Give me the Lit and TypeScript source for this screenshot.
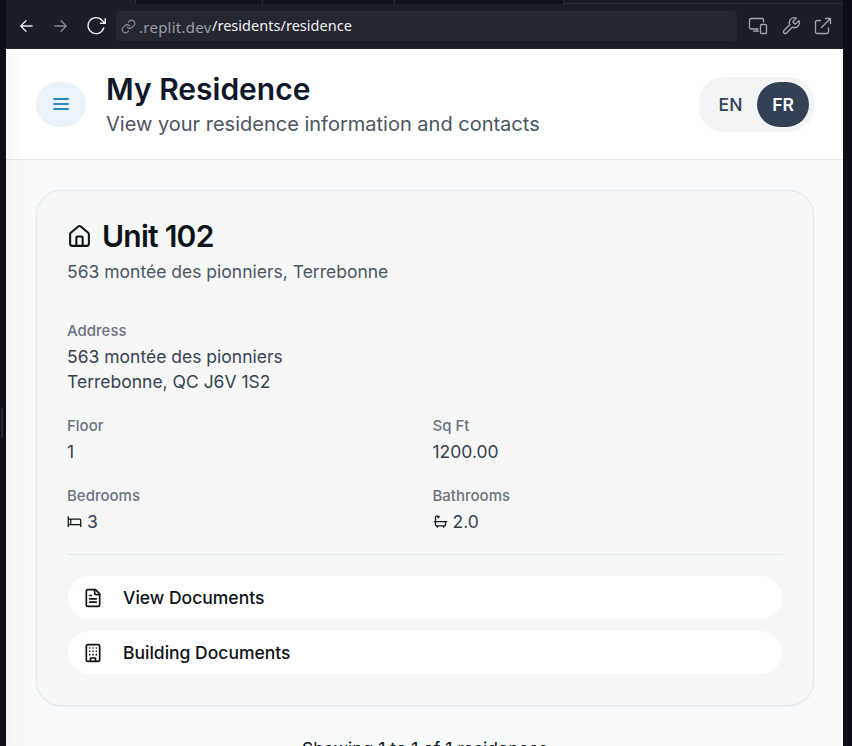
import { LitElement, html, css, svg } from "lit";
import { customElement, property } from "lit/decorators.js";

const glyphs: Record<string, { box: string; art: unknown }> = {
  back: { box: "0 0 16 16", art: svg`<path d="M15 8H2M8 2 2 8l6 6"/>` },
  forward: { box: "0 0 16 16", art: svg`<path d="M1 8h13M8 2l6 6-6 6"/>` },
  reload: { box: "0 0 20 20", art: svg`<path d="M18.300 7.200 15.200 4.500A8 8 0 1 0 16.700 12M18.300 2.700v4.600h-4.900"/>` },
  link: {
    box: "0 0 24 24",
    art: svg`<path d="M10 13a5 5 0 0 0 7.54.54l3-3a5 5 0 0 0-7.07-7.07l-1.72 1.71"/><path d="M14 11a5 5 0 0 0-7.54-.54l-3 3a5 5 0 0 0 7.07 7.07l1.71-1.71"/>`,
  },
  devices: {
    box: "0 0 20 18",
    art: svg`<path d="M15.500 5V2.700A1.200 1.200 0 0 0 14.300 1.500H3A1.500 1.500 0 0 0 1.500 3v7.500A1.500 1.500 0 0 0 3 12h7M8.500 12v2M5.500 14.200h5"/><rect x="12.500" y="7.500" width="6" height="9" rx="1"/>`,
  },
  wrench: {
    box: "0 0 24 24",
    art: svg`<path d="M14.7 6.300a1 1 0 0 0 0 1.400l1.600 1.600a1 1 0 0 0 1.400 0l3.770-3.770a6 6 0 0 1-7.940 7.940l-6.910 6.910a2.120 2.120 0 0 1-3-3l6.910-6.910a6 6 0 0 1 7.940-7.940l-3.760 3.760z"/>`,
  },
  external: {
    box: "0 0 18 18",
    art: svg`<path d="M6.500 3.500H3A1.500 1.500 0 0 0 1.500 5v10A1.500 1.500 0 0 0 3 16.500h10a1.500 1.500 0 0 0 1.500-1.500v-4M11.500 1.500h5v5M16.500 1.500 7.500 10.500"/>`,
  },
  menu: { box: "0 0 20 20", art: svg`<path d="M3 5h14M3 10h14M3 15h14"/>` },
  house: {
    box: "0 0 24 24",
    art: svg`<path d="M15 21v-8a1 1 0 0 0-1-1h-4a1 1 0 0 0-1 1v8"/><path d="M3 10a2 2 0 0 1 .709-1.528l7-5.999a2 2 0 0 1 2.582 0l7 5.999A2 2 0 0 1 21 10v9a2 2 0 0 1-2 2H5a2 2 0 0 1-2-2z"/>`,
  },
  bed: { box: "0 0 24 24", art: svg`<path d="M2 4v16M2 8h18a2 2 0 0 1 2 2v10M2 17h20M6 8v9"/>` },
  bath: {
    box: "0 0 24 24",
    art: svg`<path d="M10 4 8 6M17 19v2M2 12h20M7 19v2M9 5 7.621 3.621A2.121 2.121 0 0 0 4 5v12a2 2 0 0 0 2 2h12a2 2 0 0 0 2-2v-5"/>`,
  },
  file: {
    box: "0 0 24 24",
    art: svg`<path d="M15 2H6a2 2 0 0 0-2 2v16a2 2 0 0 0 2 2h12a2 2 0 0 0 2-2V7Z"/><path d="M14 2v4a2 2 0 0 0 2 2h4M10 9H8M16 13H8M16 17H8"/>`,
  },
  building: {
    box: "0 0 24 24",
    art: svg`<rect width="16" height="20" x="4" y="2" rx="2"/><path d="M9 22v-4h6v4M8 6h.01M16 6h.01M12 6h.01M12 10h.01M12 14h.01M16 10h.01M16 14h.01M8 10h.01M8 14h.01"/>`,
  },
};

@customElement("line-icon")
class LineIcon extends LitElement {
  @property() name = "";
  static styles = css`
    :host { display: block; flex: none; }
    .art {
      display: block; width: 100%; height: 100%; fill: none; stroke: currentColor;
      stroke-width: var(--stroke, 2); stroke-linecap: round; stroke-linejoin: round;
    }
  `;
  render() {
    const g = glyphs[this.name];
    return html`<svg class="art" viewBox=${g.box}>${g.art}</svg>`;
  }
}

@customElement("app-root")
class AppRoot extends LitElement {
  static styles = css`
    :host {
      display: flex; flex-direction: column; width: 852px; height: 746px; overflow: hidden;
      box-sizing: border-box; padding: 0 9px 0 6px; position: relative;
      background: #0e0e17; font-family: Inter, "Liberation Sans", sans-serif; color: #0d1317;
    }
    * { box-sizing: border-box; }
    h1, h2, p, dl, dt, dd { margin: 0; font-weight: 400; }
    button { font: inherit; border: 0; margin: 0; }
    .handle { position: absolute; left: 1px; top: 408px; width: 2px; height: 30px; background: #282a37; }

    .tabs { display: flex; flex: none; height: 4px; padding-left: 129px; background: #1b1d26; border-bottom: 1px solid #1b1d26; }
    .tab { border-left: 1px solid #2c2e38; background: #121318; height: 4px; }
    .t1 { width: 127px; } .t2 { width: 132px; } .t3 { width: 170px; border-right: 1px solid #2c2e38; }
    .tail { flex: 1; height: 4px; background: #181a22; border-bottom: 1px solid #2b2c37; }

    .bar { display: flex; flex: none; align-items: center; height: 45px; background: #1b1d26; padding: 0 11px 0 13px; color: #a3a6af; border-bottom: 1px solid #20222e; }
    .back { width: 14px; height: 14px; color: #e5e7eb; --stroke: 1.500; }
    .forward { width: 14px; height: 14px; margin-left: 21px; color: #858993; --stroke: 1.500; }
    .reload { width: 20px; height: 20px; margin-left: 19px; color: #eceef1; --stroke: 1.400; }
    .url { display: flex; align-items: center; width: 622px; height: 30px; margin-left: 9px; padding-left: 5px; border-radius: 5px; background: #252730; font-family: "Noto Sans", sans-serif; font-size: 15px; white-space: pre; }
    .link { width: 15px; height: 15px; color: #8d909a; --stroke: 1.700; margin-right: 3px; }
    .host { color: #9b9ea8; padding-top: 2px; width: 73px; letter-spacing: 0.250px; }
    .path { color: #f0f1f4; font-size: 14.500px; padding-bottom: 2px; letter-spacing: 0.030px; }
    .devices { width: 20px; height: 18px; margin-left: 11px; --stroke: 1.300; }
    .wrench { width: 20px; height: 20px; margin-left: 13px; --stroke: 1.600; }
    .external { width: 18px; height: 18px; margin-left: 13px; --stroke: 1.300; }

    .page { flex: 1; min-height: 0; display: flex; flex-direction: column; background: #f8fafc; position: relative; }
    .shade { position: absolute; left: 0; top: 0; bottom: 0; width: 20px; background: linear-gradient(90deg, rgba(0,0,0,.025), rgba(0,0,0,0)); }
    .header { display: flex; flex: none; align-items: center; height: 111px; padding: 0 29px 0 30px; background: #fff; border-bottom: 1px solid #e2e6ea; }
    .menu { display: flex; align-items: center; justify-content: center; width: 50px; height: 45px; border-radius: 22.500px; background: #eaf2fa; color: #3286bd; padding: 0; }
    .menu-icon { width: 20px; height: 20px; margin-top: -1px; --stroke: 2; }
    .heading { flex: 1; margin-left: 20px; }
    .title { font-size: 30px; line-height: 40px; font-weight: 600; color: #0f172a; }
    .sub { font-size: 20px; line-height: 30px; color: #4b5563; }
    .langs { display: flex; width: 115px; height: 55px; padding: 5px; border-radius: 25px; background: #f2f4f6; }
    .lang { padding: 0; width: 53px; border-radius: 22.500px; background: none; color: #334155; font-size: 17.500px; font-weight: 500; }
    .on { width: 52px; background: #334155; color: #fff; font-weight: 600; }

    .card { flex: none; height: 516px; margin: 30px 29px 0 30px; padding: 30px; border: 1px solid #dfe8ee; border-radius: 25px; background: #f6f8f8; box-shadow: 0 1px 2px rgba(0,0,0,.05); }
    .unit { display: flex; align-items: center; height: 30px; font-size: 30px; font-weight: 600; letter-spacing: -0.750px; gap: 10px; }
    .house { width: 25px; height: 25px; }
    .where { font-size: 17.500px; line-height: 25px; color: #4b5563; margin-top: 8px; }
    .facts { display: grid; grid-template-columns: 1fr 1fr; column-gap: 15px; row-gap: 20px; margin-top: 35px; }
    .wide { grid-column: span 2; }
    .label { font-size: 15px; line-height: 20px; font-weight: 500; color: #6b7280; height: 25px; padding-top: 2px; }
    .value { font-size: 17.500px; line-height: 25px; color: #374151; display: flex; align-items: center; gap: 5px; }
    .stack { display: block; }
    .small { width: 15px; height: 15px; color: #0d1317; }
    .actions { display: flex; flex-direction: column; gap: 12px; margin-top: 20px; border-top: 1px solid #dfe8ee; padding: 21px 1px 0; }
    .action { display: flex; align-items: center; height: 43px; padding: 0 0 0 15px; border-radius: 21.500px; background: #fff; color: #0d1317; font-size: 17.500px; font-weight: 500; }
    .doc { width: 20px; height: 20px; margin-right: 20px; }
    .count { text-align: center; font-size: 17.500px; line-height: 25px; margin-top: 30px; padding-left: 1px; }
  `;

  fact(label: string, value: string, icon = "") {
    return html`<div>
      <dt class="label">${label}</dt>
      <dd class="value">${icon ? html`<line-icon class="small" name=${icon}></line-icon>` : ""}<span>${value}</span></dd>
    </div>`;
  }

  action(icon: string, label: string) {
    return html`<button class="action"><line-icon class="doc" name=${icon}></line-icon><span>${label}</span></button>`;
  }

  render() {
    return html`
      <div class="handle"></div>
      <div class="tabs"><div class="tab t1"></div><div class="tab t2"></div><div class="tab t3"></div><div class="tail"></div></div>
      <nav class="bar">
        <line-icon class="back" name="back"></line-icon>
        <line-icon class="forward" name="forward"></line-icon>
        <line-icon class="reload" name="reload"></line-icon>
        <div class="url"><line-icon class="link" name="link"></line-icon><span class="host">.replit.dev</span><span class="path">/residents/residence</span></div>
        <line-icon class="devices" name="devices"></line-icon>
        <line-icon class="wrench" name="wrench"></line-icon>
        <line-icon class="external" name="external"></line-icon>
      </nav>
      <div class="page">
        <header class="header">
          <button class="menu"><line-icon class="menu-icon" name="menu"></line-icon></button>
          <div class="heading">
            <h1 class="title">My Residence</h1>
            <p class="sub">View your residence information and contacts</p>
          </div>
          <div class="langs"><button class="lang">EN</button><button class="lang on">FR</button></div>
        </header>
        <section class="card">
          <h2 class="unit"><line-icon class="house" name="house"></line-icon><span>Unit 102</span></h2>
          <p class="where">563 montée des pionniers, Terrebonne</p>
          <dl class="facts">
            <div class="wide">
              <dt class="label">Address</dt>
              <dd class="value stack">563 montée des pionniers<br />Terrebonne, QC J6V 1S2</dd>
            </div>
            ${this.fact("Floor", "1")} ${this.fact("Sq Ft", "1200.00")}
            ${this.fact("Bedrooms", "3", "bed")} ${this.fact("Bathrooms", "2.0", "bath")}
          </dl>
          <div class="actions">${this.action("file", "View Documents")} ${this.action("building", "Building Documents")}</div>
        </section>
        <p class="count">Showing 1 to 1 of 1 residences</p>
        <div class="shade"></div>
      </div>
    `;
  }
}
